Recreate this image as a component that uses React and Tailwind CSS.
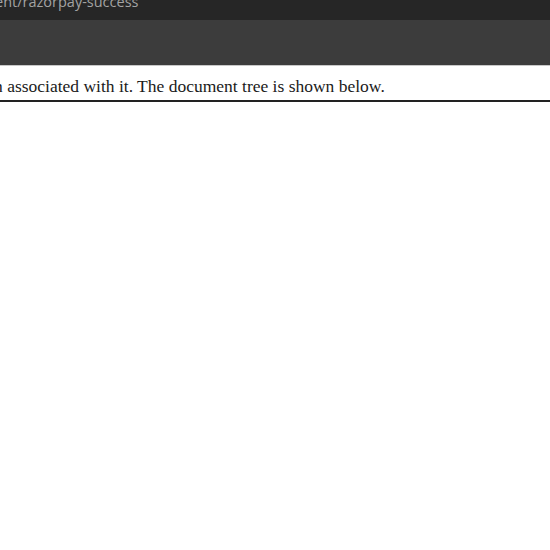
export default function App() {
  return (
    <div className="w-[550px] h-[550px] bg-white overflow-hidden">
      <div className="h-[20px] bg-[#262626] overflow-hidden">
        <div
          className="whitespace-nowrap text-[14.5px] leading-[14px] text-[#a3a3a3] -mt-[5px] -ml-[5px]"
          style={{ fontFamily: '"Open Sans", "Liberation Sans", sans-serif' }}
        >
          ent/razorpay-success
        </div>
      </div>
      <div className="h-[45px] bg-[#3c3c3c]" />
      <div className="h-[37px] border-t border-[#c8c8c8] border-b-2 border-b-[#222] bg-white overflow-hidden">
        <div
          className="whitespace-nowrap text-[17.5px] leading-[20px] pt-[10px] text-[#1a1a1a] -ml-[6px]"
          style={{ fontFamily: '"Liberation Serif", serif' }}
        >
          n associated with it. The document tree is shown below.
        </div>
      </div>
    </div>
  )
}
